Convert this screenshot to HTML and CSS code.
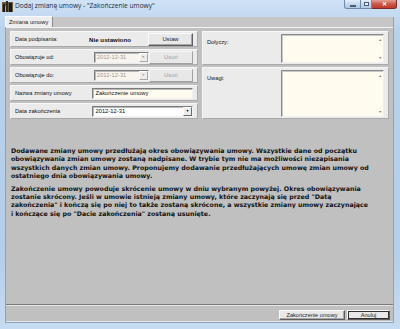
FILE: index.html
```html
<!DOCTYPE html>
<html lang="pl">
<head>
    <meta charset="UTF-8">
    <title>Dodaj zmianę umowy</title>
    <link rel="stylesheet" href="styles.css">
</head>
<body>
    <div class="window">
        <div class="titlebar">
            <svg class="app-icon" width="11" height="11" viewBox="0 0 11 11">
                <rect x="0" y="1" width="11" height="10" fill="#6b5a3a"/>
                <rect x="1" y="3" width="2" height="8" fill="#1a1a1a"/>
                <rect x="4" y="0" width="2" height="11" fill="#2b2b2b"/>
                <rect x="7" y="2" width="3" height="9" fill="#1a1a1a"/>
                <rect x="3" y="5" width="1" height="6" fill="#c9a25a"/>
            </svg>
            <span class="title">Dodaj zmianę umowy - "Zakończenie umowy"</span>
            <div class="controls">
                <span class="ctl ctl-min"><i></i></span>
                <span class="ctl ctl-max"><i></i></span>
                <span class="ctl ctl-close">✕</span>
            </div>
        </div>

        <div class="client">
            <div class="tabs">
                <div class="tab">Zmiana umowy</div>
            </div>

            <div class="page">
                <div class="form">
                    <div class="row">
                        <span class="label">Data podpisania:</span>
                        <span class="status">Nie ustawiono</span>
                        <span class="btn">Ustaw</span>
                    </div>
                    <div class="side side-top">
                        <span class="label">Dołyczy:</span>
                        <div class="memo"><span class="up">▲</span><span class="down">▼</span></div>
                    </div>
                    <div class="row">
                        <span class="label">Obowiązuje od:</span>
                        <span class="combo combo-small disabled">2012-12-31<span class="arrow">▼</span></span>
                        <span class="btn disabled">Usuń</span>
                    </div>
                    <div class="row">
                        <span class="label">Obowiązuje do:</span>
                        <span class="combo combo-small disabled">2012-12-31<span class="arrow">▼</span></span>
                        <span class="btn disabled">Usuń</span>
                    </div>
                    <div class="side side-bottom">
                        <span class="label">Uwagi:</span>
                        <div class="memo"><span class="up">▲</span><span class="down">▼</span></div>
                    </div>
                    <div class="row">
                        <span class="label">Nazwa zmiany umowy</span>
                        <span class="edit">Zakończenie umowy</span>
                    </div>
                    <div class="row">
                        <span class="label">Data zakończenia</span>
                        <span class="combo">2012-12-31<span class="arrow">▼</span></span>
                    </div>
                </div>

                <div class="info">
                    <p>Dodawane zmiany umowy przedłużają okres obowiązywania umowy. Wszystkie dane od początku<br>
                    obowiązywania zmian umowy zostaną nadpisane. W trybie tym nie ma możliwości niezapisania<br>
                    wszystkich danych zmian umowy. Proponujemy dodawanie przedłużających umowę zmian umowy od<br>
                    ostatniego dnia obowiązywania umowy.</p>
                    <p>Zakończenie umowy powoduje skrócenie umowy w dniu wybranym powyżej. Okres obowiązywania<br>
                    zostanie skrócony. Jeśli w umowie istnieją zmiany umowy, które zaczynają się przed "Datą<br>
                    zakończenia" i kończą się po niej to także zostaną skrócone, a wszystkie zmiany umowy zaczynające<br>
                    i kończące się po "Dacie zakończenia" zostaną usunięte.</p>
                </div>
            </div>

            <div class="footer">
                <span class="btn btn-wide">Zakończenie umowy</span>
                <span class="btn btn-default">Anuluj</span>
            </div>
        </div>
    </div>
</body>
</html>
```

FILE: styles.css
```css
* {
    box-sizing: border-box;
}

body {
    margin: 0;
    font-family: "Liberation Sans", Arial, sans-serif;
    color: #000;
}

.window {
    width: 400px;
    height: 329px;
    display: flex;
    flex-direction: column;
    background: linear-gradient(#cfe2f5, #b9d2ec 30px, #b4cde8 250px, #c6dcf2);
}

/* title bar */
.titlebar {
    height: 17px;
    display: flex;
    align-items: flex-start;
}

.app-icon {
    margin: 1px 0 0 2px;
}

.title {
    margin-left: 2px;
    font-family: "Open Sans", "Liberation Sans", sans-serif;
    font-size: 6.6px;
    line-height: 12px;
    color: #1c2a3a;
}

.controls {
    margin-left: auto;
    margin-right: 3px;
    display: flex;
}

.ctl {
    height: 9px;
    border: 1px solid #6f8aa8;
    border-top: none;
    background: linear-gradient(#e4eef9, #c4d8ee 50%, #b0c9e4);
    display: flex;
    align-items: center;
    justify-content: center;
}

.ctl-min {
    width: 17px;
    border-radius: 0 0 0 3px;
}

.ctl-min i {
    width: 6px;
    height: 2px;
    margin-top: 3px;
    background: #fff;
    border: 1px solid #4a5d74;
}

.ctl-max {
    width: 11px;
    border-left: none;
}

.ctl-max i {
    width: 5px;
    height: 4px;
    border: 1px solid #4a5d74;
    background: #e8f0f8;
}

.ctl-close {
    width: 25px;
    border-left: none;
    border-color: #7a2a22;
    border-radius: 0 0 3px 0;
    background: linear-gradient(#e2a295, #cd5545 50%, #c03a2b);
    color: #fff;
    font-size: 6px;
    font-weight: bold;
    line-height: 1;
}

/* client area */
.client {
    flex: 1;
    margin: 0 6px 6px 5px;
    background: #c0c0c0;
    display: flex;
    flex-direction: column;
    border: 1px solid #8da2ba;
    border-top: none;
}

.tabs {
    height: 11px;
    display: flex;
    align-items: flex-end;
    background: #c6c6c6;
    border-bottom: 1px solid #f4f4f4;
}

.tab {
    height: 11px;
    margin-left: -1px;
    padding: 0 4px 0 3px;
    background: #ededed;
    border: 1px solid #fbfbfb;
    border-right-color: #8c8c8c;
    border-bottom: none;
    font-size: 5.8px;
    line-height: 10px;
    color: #222;
}

.page {
    flex: 1;
    padding: 3px 5px 0 4px;
}

.form {
    display: grid;
    grid-template-columns: 188px 187px;
    grid-template-rows: repeat(5, 16px);
    gap: 2px 4px;
}

.row,
.side {
    background: #ebebeb;
    border: 1px solid;
    border-color: #f7f7f7 #a9a9a9 #a9a9a9 #f7f7f7;
    font-size: 5.7px;
    color: #111;
}

.row {
    display: flex;
    align-items: center;
    padding: 0 4px;
}

.row .label {
    width: 74px;
}

.status {
    width: 58px;
    font-weight: bold;
    font-size: 6.2px;
}

.side {
    position: relative;
    display: flex;
    align-items: flex-start;
    padding: 2px 4px 1px 4px;
}

.side .label {
    margin-top: 5px;
    width: 74px;
}

.side-top {
    grid-column: 2;
    grid-row: 1 / 3;
}

.side-bottom {
    grid-column: 2;
    grid-row: 3 / 6;
}

.memo {
    position: relative;
    flex: 1;
    height: 100%;
    background: #fffbef;
    border: 1px solid;
    border-color: #8a8a8a #f0f0f0 #f0f0f0 #8a8a8a;
    box-shadow: inset 1px 1px 0 #c8c8c8;
}

.memo span {
    position: absolute;
    right: 1px;
    font-size: 3.5px;
    color: #777;
}

.memo .up {
    top: 3px;
}

.memo .down {
    bottom: 2px;
}

.btn {
    margin-left: auto;
    width: 45px;
    height: 13px;
    background: #e8e8e8;
    border: 1px solid;
    border-color: #fafafa #5e5e5e #5e5e5e #fafafa;
    box-shadow: inset -1px -1px 0 #a6a6a6;
    font-size: 5.8px;
    line-height: 11px;
    text-align: center;
    color: #222;
}

.btn.disabled {
    color: #9c9c9c;
    border-color: #f5f5f5 #a0a0a0 #a0a0a0 #f5f5f5;
    box-shadow: none;
}

.combo,
.edit {
    margin-left: 6px;
    width: 104px;
    height: 11px;
    display: flex;
    align-items: center;
    padding-left: 2px;
    border: 1px solid;
    border-color: #7c7c7c #f2f2f2 #f2f2f2 #7c7c7c;
    box-shadow: inset 1px 1px 0 #b8b8b8;
    font-size: 5.8px;
}

.combo {
    background: #fff;
}

.edit {
    background: #fffbef;
}

.combo-small {
    width: 56px;
}

.combo.disabled {
    background: #f7f5ee;
    color: #9a9a9a;
}

.arrow {
    margin-left: auto;
    width: 9px;
    height: 9px;
    background: #ececec;
    border: 1px solid;
    border-color: #fff #6a6a6a #6a6a6a #fff;
    font-size: 3.5px;
    line-height: 7px;
    text-align: center;
    color: #000;
}

.combo.disabled .arrow {
    color: #a0a0a0;
    border-color: #fff #a8a8a8 #a8a8a8 #fff;
}

/* fixed-size dialog, lines broken as in the original form */
.info {
    margin-top: 28px;
    padding-left: 1px;
    font-family: "DejaVu Sans", Verdana, sans-serif;
    font-size: 6.3px;
    font-weight: bold;
    line-height: 8.4px;
    white-space: nowrap;
    color: #111;
}

.info p {
    margin: 0 0 4px;
}

/* bottom bar */
.footer {
    height: 18px;
    border-top: 1px solid #7a7a7a;
    display: flex;
    justify-content: flex-end;
    align-items: center;
    gap: 2px;
    padding: 2px 3px 0 0;
    box-shadow: inset 0 1px 0 #e6e6e6, inset 0 -1px 0 #e6e6e6;
}

.footer .btn {
    margin-left: 0;
    height: 10px;
    line-height: 8px;
    font-size: 5.6px;
}

.btn-wide {
    width: 66px;
}

.btn-default {
    width: 43px;
    outline: 1px solid #303030;
    outline-offset: -2px;
}
```
